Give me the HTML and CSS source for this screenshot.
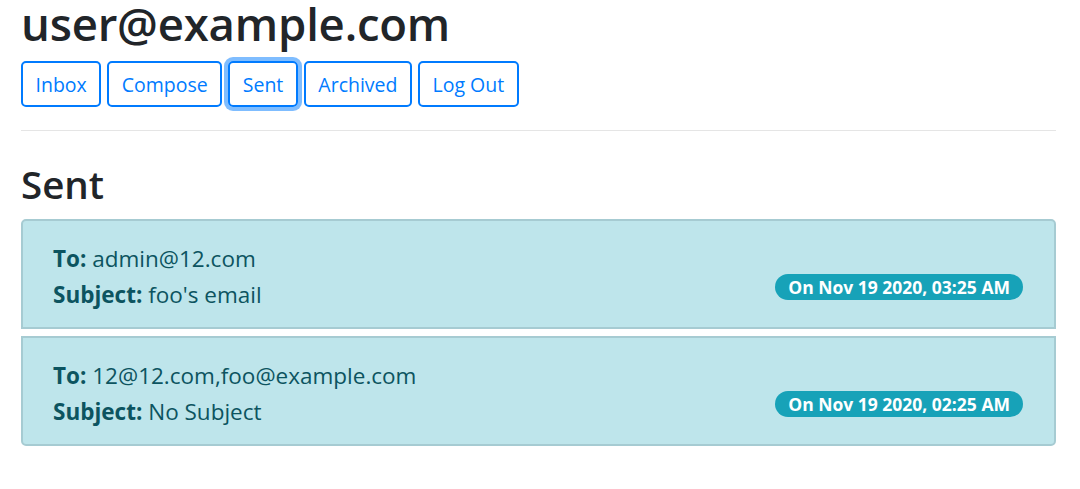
FILE: index.html
```html
<!DOCTYPE html>
<html lang="en">
<head>
<meta charset="utf-8">
<title>Mail</title>
<link rel="stylesheet" href="styles.css">
</head>
<body>
<div class="container">
  <h1 class="user">user@example.com</h1>
  <nav class="nav">
    <button class="btn">Inbox</button>
    <button class="btn">Compose</button>
    <button class="btn focus">Sent</button>
    <button class="btn">Archived</button>
    <button class="btn">Log Out</button>
  </nav>
  <hr class="rule">
  <h2 class="title">Sent</h2>
  <div class="list">
    <div class="item first">
      <div class="lines">
        <div class="line"><b>To:</b> admin@12.com</div>
        <div class="line"><b>Subject:</b> foo's email</div>
      </div>
      <span class="badge">On Nov 19 2020, 03:25 AM</span>
    </div>
    <div class="item last">
      <div class="lines">
        <div class="line"><b>To:</b> 12@12.com,foo@example.com</div>
        <div class="line"><b>Subject:</b> No Subject</div>
      </div>
      <span class="badge">On Nov 19 2020, 02:25 AM</span>
    </div>
  </div>
</div>
</body>
</html>
```

FILE: styles.css
```css
* { box-sizing: border-box; }
html, body { margin: 0; padding: 0; background: #fff; }
body {
  font-family: "Open Sans", "Noto Sans", sans-serif;
  font-size: 19px;
  color: #212529;
}
.container {
  padding: 0 24px 0 21px;
}
.user {
  margin: 0;
  font-size: 45.5px;
  font-weight: 600;
  line-height: 46px;
  letter-spacing: -0.2px;
}
.nav {
  display: flex;
  gap: 6px;
  margin-top: 15px;
}
.btn {
  font-family: inherit;
  font-size: 19.5px;
  line-height: 29px;
  color: #007bff;
  background: transparent;
  border: 2px solid #007bff;
  border-radius: 5px;
  padding: 7px 12.5px;
  height: 46px;
}
.btn.focus {
  box-shadow: 0 0 0 4px rgba(0, 123, 255, 0.5);
}
.rule {
  border: 0;
  border-top: 1px solid rgba(0, 0, 0, 0.1);
  margin: 23px 0 0 0;
}
.title {
  margin: 30px 0 0 0;
  font-size: 38.5px;
  font-weight: 600;
  line-height: 46px;
}
.list {
  margin-top: 12px;
  display: flex;
  flex-direction: column;
  gap: 7px;
}
.item {
  display: flex;
  justify-content: space-between;
  align-items: flex-start;
  background: #bee5eb;
  color: #0c5460;
  border: 2px solid #a6cbd2;
  padding: 20px 31px 17px 30px;
  height: 110px;
  font-size: 22.5px;
}
.item.first { border-radius: 5px 5px 0 0; }
.item.last { border-radius: 0 0 5px 5px; }
.line {
  line-height: 36px;
}
.line b { font-weight: 700; }
.badge {
  margin-top: 33px;
  background: #17a2b8;
  color: #fff;
  font-weight: 700;
  font-size: 17.5px;
  line-height: 18px;
  padding: 4px 13px;
  border-radius: 13px;
  white-space: nowrap;
}
```
